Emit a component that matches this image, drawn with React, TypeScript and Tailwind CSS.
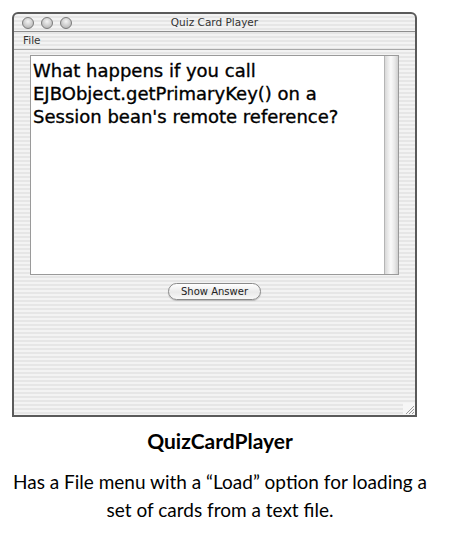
export default function App() {
  return (
    <div className="min-h-screen bg-white w-[463px] h-[544px] pt-[12px] font-['DejaVu_Sans',sans-serif]">
      {/* Window */}
      <div className="ml-[12px] w-[405px] h-[405px] border-2 border-[#5a5a5a] rounded-t-[6px] flex flex-col overflow-hidden bg-[repeating-linear-gradient(180deg,#f3f3f3_0px,#f3f3f3_2px,#e6e6e6_2px,#e6e6e6_4px)]">
        {/* Title bar */}
        <div className="relative h-[18px] flex items-center border-b border-[#8e8e8e] shrink-0">
          <div className="flex gap-[7px] pl-[8px]">
            <span className="w-[12px] h-[12px] rounded-full border border-[#7a7a7a] bg-[radial-gradient(circle_at_50%_35%,#f4f4f4,#a9a9a9)]"></span>
            <span className="w-[12px] h-[12px] rounded-full border border-[#7a7a7a] bg-[radial-gradient(circle_at_50%_35%,#f4f4f4,#a9a9a9)]"></span>
            <span className="w-[12px] h-[12px] rounded-full border border-[#7a7a7a] bg-[radial-gradient(circle_at_50%_35%,#f4f4f4,#a9a9a9)]"></span>
          </div>
          <div className="absolute inset-0 flex items-center justify-center text-[10.5px] text-[#333]">Quiz Card Player</div>
        </div>
        {/* Menu bar */}
        <div className="h-[18px] flex items-center pl-[9px] text-[10.5px] text-[#333] border-b border-[#a8a8a8] shrink-0">File</div>
        {/* Content */}
        <div className="flex-1 flex flex-col pt-[5px] pl-[16px] pr-[16px]">
          <div className="flex h-[220px] border border-[#9a9a9a]">
            <div className="flex-1 bg-white px-[2px] pt-[3px] text-[18px] leading-[23px] font-normal text-black [-webkit-text-stroke:0.35px_black]">
              What happens if you call EJBObject.getPrimaryKey() on a Session bean's remote reference?
            </div>
            <div className="w-[14px] bg-[linear-gradient(90deg,#d8d8d8,#fafafa_45%,#e8e8e8_75%,#cfcfcf)] border-l border-[#b5b5b5]"></div>
          </div>
          <div className="flex justify-center pt-[8px]">
            <button className="w-[93px] h-[17px] rounded-full border border-[#8a8a8a] bg-[linear-gradient(180deg,#ffffff,#e9e9e9_55%,#f8f8f8)] text-[10px] text-[#222] leading-none shadow-[0_1px_1px_rgba(0,0,0,0.2)]">
              Show Answer
            </button>
          </div>
          <div className="flex-1 flex justify-end items-end -mr-[16px]">
            <svg width="12" height="12" viewBox="0 0 12 12">
              <rect width="12" height="12" fill="#f6f6f6" />
              <path d="M11 3 L3 11 M11 6 L6 11 M11 9 L9 11" stroke="#9a9a9a" strokeWidth="1" />
            </svg>
          </div>
        </div>
      </div>
      {/* Caption */}
      <div className="w-[440px] text-center font-['Comic_Sans_MS','Lato',sans-serif] text-black">
        <div className="mt-[11px] text-[21px] font-bold leading-[26px]">QuizCardPlayer</div>
        <div className="mt-[14px] text-[19px] leading-[28px]">
          Has a File menu with a “Load” option for loading a
          <br />
          set of cards from a text file.
        </div>
      </div>
    </div>
  );
}
